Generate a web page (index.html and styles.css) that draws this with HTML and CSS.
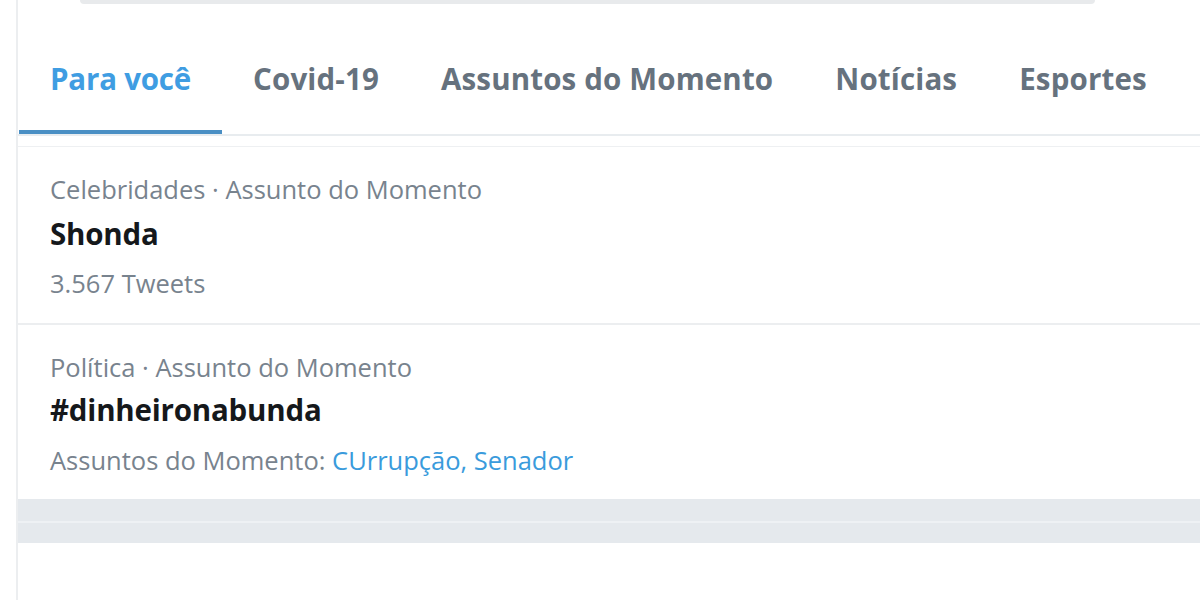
FILE: index.html
```html
<!DOCTYPE html>
<html lang="pt-BR">
<head>
<meta charset="utf-8">
<title>Explorar</title>
<link rel="stylesheet" href="styles.css">
</head>
<body>
<div class="page">
  <div class="search-edge"></div>
  <nav class="tabs">
    <a class="tab active">Para você</a>
    <a class="tab">Covid-19</a>
    <a class="tab">Assuntos do Momento</a>
    <a class="tab">Notícias</a>
    <a class="tab">Esportes</a>
  </nav>
  <div class="list">
    <div class="trend">
      <div class="meta">Celebridades · Assunto do Momento</div>
      <div class="name">Shonda</div>
      <div class="sub">3.567 Tweets</div>
    </div>
    <div class="trend second">
      <div class="meta">Política · Assunto do Momento</div>
      <div class="name">#dinheironabunda</div>
      <div class="sub">Assuntos do Momento: <span class="link">CUrrupção, Senador</span></div>
    </div>
    <div class="band"></div>
  </div>
</div>
</body>
</html>
```

FILE: styles.css
```css
html, body {
  margin: 0;
  padding: 0;
  background: #ffffff;
}

body {
  font-family: "Open Sans", "Noto Sans", "DejaVu Sans", sans-serif;
  width: 1200px;
  height: 600px;
  overflow: hidden;
}

.page {
  margin-left: 16px;
  border-left: 2px solid #eceef0;
  height: 600px;
  display: flex;
  flex-direction: column;
}

.search-edge {
  height: 4px;
  margin: 0 105px 0 62px;
  background: #e8eaec;
  border-radius: 0 0 14px 14px;
}

.tabs {
  display: flex;
  height: 126px;
  margin-top: 4px;
  padding-left: 1px;
  border-bottom: 2px solid #e8ecef;
}

.tab {
  display: flex;
  align-items: center;
  padding: 18px 31px 0;
  font-size: 29.5px;
  font-weight: 700;
  color: #66727e;
  letter-spacing: 0.15px;
  border-bottom: 4px solid transparent;
}

.tab.active {
  color: #3f9de2;
  letter-spacing: -0.2px;
  border-bottom-color: #4a8fc4;
}

.list {
  margin-top: 10px;
  border-top: 1px solid #eef0f2;
  display: flex;
  flex-direction: column;
}

.trend {
  padding: 26px 32px 24px;
  border-bottom: 2px solid #eceef0;
}

.trend.second {
  border-bottom: none;
  padding-top: 26px;
  padding-bottom: 23px;
}

.meta {
  font-size: 25.5px;
  line-height: 32px;
  color: #78838e;
}

.name {
  margin-top: 12px;
  font-size: 29.5px;
  line-height: 34px;
  font-weight: 700;
  color: #15181b;
  letter-spacing: -0.2px;
}

.second .name {
  margin-top: 10px;
}

.sub {
  margin-top: 16px;
  font-size: 25.5px;
  line-height: 32px;
  color: #78838e;
}

.second .sub {
  margin-top: 17px;
}

.link {
  color: #3a9bdc;
}

.band {
  height: 44px;
  background: linear-gradient(#e5e9ed 0 22px, #eef1f4 22px 24px, #e5e9ed 24px);
}
```
